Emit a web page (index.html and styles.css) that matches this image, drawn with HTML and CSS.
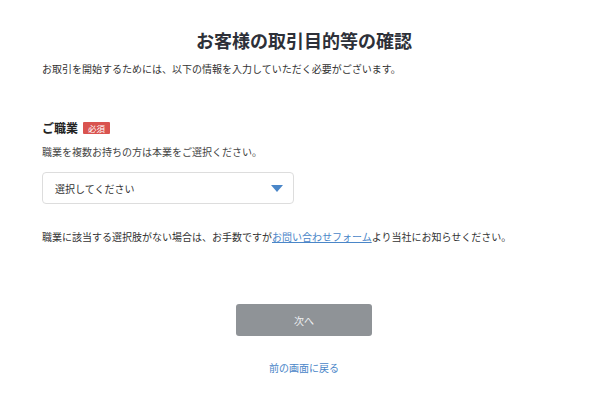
FILE: index.html
```html
<!DOCTYPE html>
<html lang="ja">
<head>
    <meta charset="UTF-8">
    <meta name="viewport" content="width=device-width, initial-scale=1.0">
    <title>お客様の取引目的等の確認</title>
    <link rel="stylesheet" href="styles.css">
</head>
<body>
    <div class="container">
        <h1 class="title">お客様の取引目的等の確認</h1>
        <p class="lead">お取引を開始するためには、以下の情報を入力していただく必要がございます。</p>

        <div class="form-group">
            <div class="label-row">
                <label for="job" class="label">ご職業</label>
                <span class="badge">必須</span>
            </div>
            <p class="help">職業を複数お持ちの方は本業をご選択ください。</p>
            <div class="select">
                <span class="select-text">選択してください</span>
                <svg class="select-arrow" width="12" height="7" viewBox="0 0 12 7">
                    <path d="M0 0 L12 0 L6 7 Z" fill="#4a86c8"/>
                </svg>
            </div>
            <p class="note">職業に該当する選択肢がない場合は、お手数ですが<a href="#" class="note-link">お問い合わせフォーム</a>より当社にお知らせください。</p>
        </div>

        <div class="actions">
            <button type="button" class="btn" disabled>次へ</button>
            <a href="#" class="back-link">前の画面に戻る</a>
        </div>
    </div>
</body>
</html>
```

FILE: styles.css
```css
* {
    margin: 0;
    padding: 0;
    box-sizing: border-box;
}

body {
    font-family: "Noto Sans CJK JP", "Noto Sans", sans-serif;
    background: #fff;
    color: #333;
}

.container {
    padding: 27px 34px 0 42px;
}

.title {
    font-size: 18px;
    line-height: 26px;
    font-weight: 700;
    color: #2d3038;
    text-align: center;
}

.lead {
    margin-top: 8px;
    font-size: 10px;
    line-height: 16px;
}

.form-group {
    margin-top: 42px;
}

.label-row {
    display: flex;
    align-items: center;
    gap: 5px;
    height: 18px;
}

.label {
    font-size: 12px;
    line-height: 18px;
    font-weight: 700;
    color: #222;
}

.badge {
    background: #d9534f;
    color: #fff;
    font-size: 8.5px;
    line-height: 12px;
    padding: 0 5px;
    border-radius: 1px;
}

.help {
    margin-top: 7px;
    font-size: 10px;
    line-height: 16px;
    color: #444;
}

.select {
    margin-top: 12px;
    width: 252px;
    height: 32px;
    border: 1px solid #ddd;
    border-radius: 4px;
    display: flex;
    align-items: center;
    justify-content: space-between;
    padding: 0 10px 0 12px;
}

.select-text {
    font-size: 10px;
    color: #333;
}

.note {
    margin-top: 25px;
    font-size: 10px;
    line-height: 16px;
    color: #333;
}

.note-link {
    color: #4a86c8;
    text-decoration: underline;
}

.actions {
    margin-top: 59px;
    display: flex;
    flex-direction: column;
    align-items: center;
}

.btn {
    width: 136px;
    height: 32px;
    background: #8f9397;
    color: #eef0f2;
    border: none;
    border-radius: 3px;
    font-family: inherit;
    font-size: 10px;
}

.back-link {
    margin-top: 24px;
    font-size: 10px;
    line-height: 16px;
    color: #4a86c8;
    text-decoration: none;
}
```
